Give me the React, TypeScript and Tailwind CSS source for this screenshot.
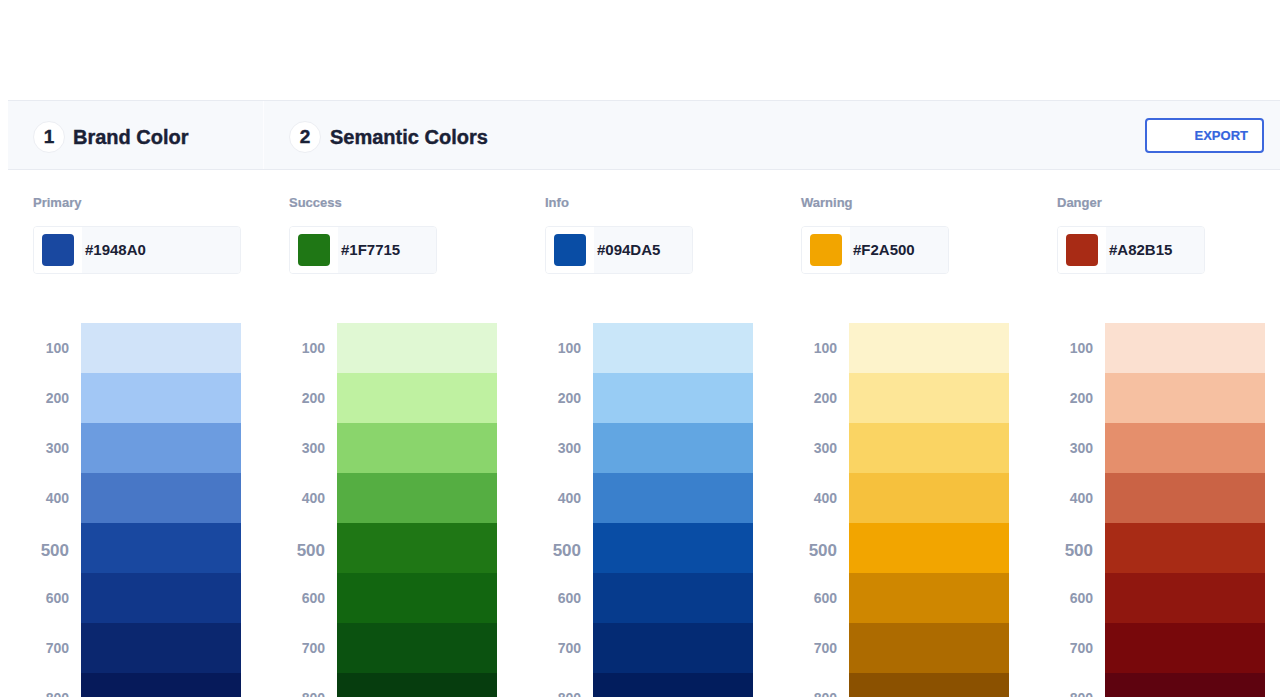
import React from "react";

type Col = { label: string; hex: string; shades: string[]; wide?: boolean };

const cols: Col[] = [
  {
    label: "Primary",
    hex: "#1948A0",
    wide: true,
    shades: ["#d0e3f9", "#a2c7f5", "#6c9ce0", "#4877c6", "#1948a0", "#11378a", "#0b276f", "#061a5a"],
  },
  {
    label: "Success",
    hex: "#1F7715",
    shades: ["#e0f8d3", "#bff1a1", "#8ad56c", "#55ae42", "#1f7715", "#126610", "#0b5210", "#063d0e"],
  },
  {
    label: "Info",
    hex: "#094DA5",
    shades: ["#c9e6f9", "#98ccf4", "#62a6e2", "#3a80cc", "#094da5", "#063b8d", "#042b74", "#021d5d"],
  },
  {
    label: "Warning",
    hex: "#F2A500",
    shades: ["#fdf3cb", "#fde697", "#fad463", "#f6c13d", "#f2a500", "#cf8700", "#ad6b00", "#8b5100"],
  },
  {
    label: "Danger",
    hex: "#A82B15",
    shades: ["#fbe0d0", "#f6c0a1", "#e58f6c", "#ca6345", "#a82b15", "#90170f", "#78080b", "#5e030f"],
  },
];

const steps = ["100", "200", "300", "400", "500", "600", "700", "800"];

function Column({ col }: { col: Col }) {
  return (
    <div className="pl-[25px] pt-[25px]">
      <div className="text-[13px] font-bold leading-[16px] text-[#8e98b0] [-webkit-text-stroke:0.2px_#8e98b0]">
        {col.label}
      </div>
      <div
        className={
          col.wide
            ? "mt-[15px] flex h-[48px] w-[208px] overflow-hidden rounded-[4px] border border-[#edf0f5]"
            : "mt-[15px] flex h-[48px] w-[148px] overflow-hidden rounded-[4px] border border-[#edf0f5]"
        }
      >
        <div className="flex w-[48px] items-center justify-center bg-white">
          <div className="h-[32px] w-[32px] rounded-[4px]" style={{ backgroundColor: col.hex }} />
        </div>
        <div className="flex flex-1 items-center bg-[#f7f9fc] pl-[3px] text-[15px] font-semibold text-[#1a2136]">
          {col.hex}
        </div>
      </div>
      <div className="mt-[49px] flex flex-col">
        {col.shades.map((c, i) => (
          <div key={i} className="flex h-[50px] items-center">
            <div
              className={
                i === 4
                  ? "mt-[5px] w-[36px] text-right text-[17px] font-bold text-[#8e98b0]"
                  : "w-[36px] text-right text-[14px] font-bold text-[#8e98b0]"
              }
            >
              {steps[i]}
            </div>
            <div className="ml-[12px] h-[50px] w-[160px]" style={{ backgroundColor: c }} />
          </div>
        ))}
      </div>
    </div>
  );
}

export default function App() {
  return (
    <div
      className="h-[697px] w-[1280px] overflow-hidden bg-white"
      style={{ fontFamily: '"Liberation Sans", Arial, sans-serif' }}
    >
      <div className="ml-2 pt-[100px]">
        <div className="flex h-[70px] items-center border-y border-[#e8ebf1] bg-[#f7f9fc]">
          <div className="flex h-full w-[256px] items-center border-r border-[#fdfdff] pl-[25px] pt-[3px]">
            <div className="flex h-[32px] w-[32px] items-center justify-center rounded-full border border-[#eceef3] bg-white pt-[2px] text-[19px] font-bold text-[#1a2136] [-webkit-text-stroke:0.4px_#1a2136]">
              1
            </div>
            <div className="ml-[8px] text-[20px] font-bold text-[#1a2136] [-webkit-text-stroke:0.4px_#1a2136]">
              Brand Color
            </div>
          </div>
          <div className="flex h-full flex-1 items-center pl-[25px] pr-[16px] pt-[3px]">
            <div className="flex h-[32px] w-[32px] items-center justify-center rounded-full border border-[#eceef3] bg-white pt-[2px] text-[19px] font-bold text-[#1a2136] [-webkit-text-stroke:0.4px_#1a2136]">
              2
            </div>
            <div className="ml-[9px] text-[20px] font-bold text-[#1a2136] [-webkit-text-stroke:0.4px_#1a2136]">
              Semantic Colors
            </div>
            <div className="flex-1" />
            <button className="-mt-[3px] flex h-[35px] w-[119px] items-center justify-end rounded-[4px] border-2 border-[#3d68dd] bg-white pr-[14px] pt-[1px] text-[13px] font-bold text-[#3565dd] [-webkit-text-stroke:0.2px_#3565dd]">
              EXPORT
            </button>
          </div>
        </div>
        <div className="grid w-[1280px] grid-cols-[256px_256px_256px_256px_256px]">
          {cols.map((c) => (
            <Column key={c.label} col={c} />
          ))}
        </div>
      </div>
    </div>
  );
}
